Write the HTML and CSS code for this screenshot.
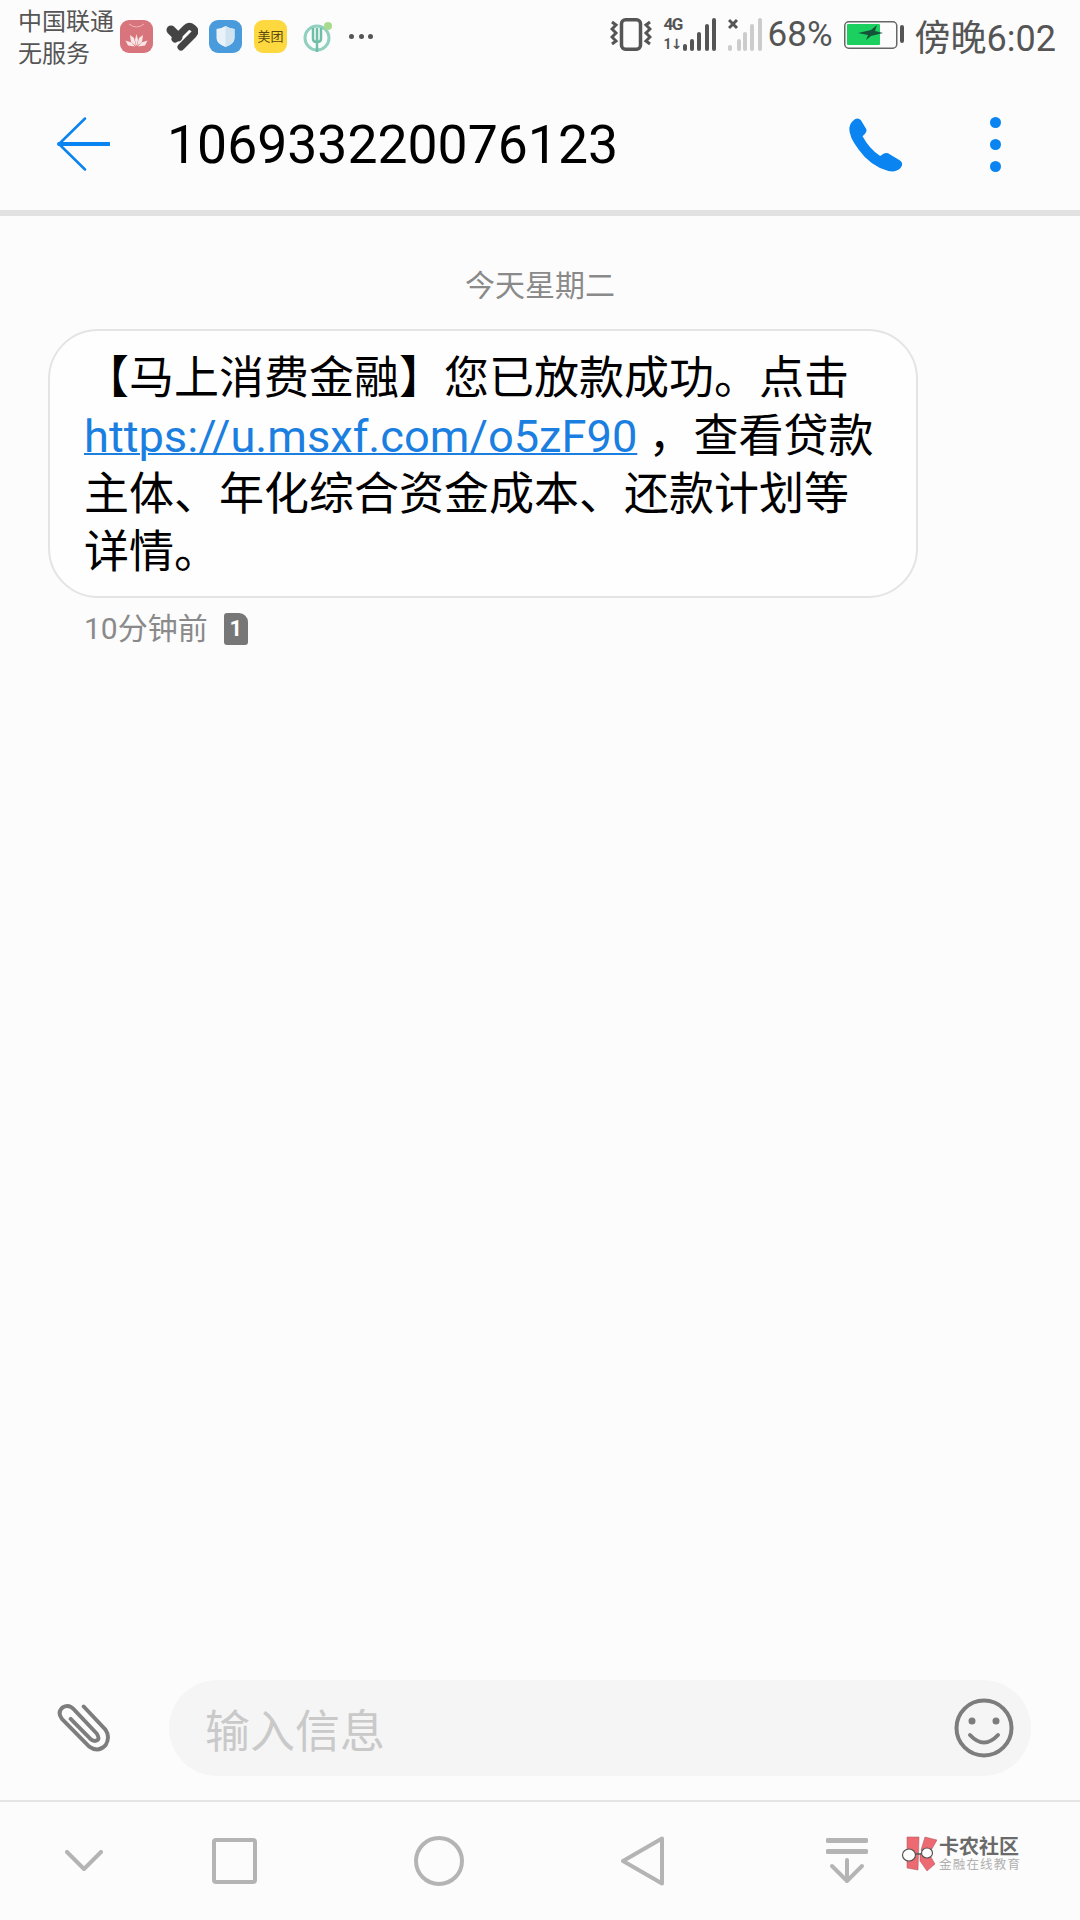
FILE: index.html
```html
<!DOCTYPE html>
<html lang="zh-CN">
<head>
<meta charset="utf-8">
<title>106933220076123</title>
<link rel="stylesheet" href="styles.css">
</head>
<body>
<div class="screen">
  <div class="status">
    <div class="carrier"><span>中国联通</span><span>无服务</span></div>
    <div class="notif">
      <svg class="ni" width="33" height="33" viewBox="0 0 33 33"><rect width="33" height="33" rx="9" fill="#d8747b"/><path d="M9 4q7.500 6 15 0" fill="none" stroke="#eeb5b8" stroke-width="1"/><g fill="#f8e6e6"><path d="M16.500 26l-1.500-6 1.500-6 1.500 6z"/><path d="M16 26l-5-4-1-7 4 3z"/><path d="M17 26l5-4 1-7-4 3z"/><path d="M15 26.500l-7-1-2.500-5 6 2z"/><path d="M18 26.500l7-1 2.500-5-6 2z"/></g></svg>
      <svg class="ni heart" width="33" height="30" viewBox="0 0 33 30"><path d="M6 9l7 7" fill="none" stroke="#444" stroke-width="9" stroke-linecap="round"/><path d="M10 18L21 7q3-3 7 0t0 7L16 26" fill="none" stroke="#444" stroke-width="7" stroke-linecap="round"/></svg>
      <svg class="ni shield" width="33" height="33" viewBox="0 0 33 33"><rect width="33" height="33" rx="9" fill="#4a9bdb"/><path d="M16.500 6q5 3 9 3v9q0 6-9 9-9-3-9-9V9q4 0 9-3z" fill="#e8f2f8"/><path d="M16.500 6q5 3 9 3v9q0 6-9 9z" fill="#cfe3f0"/></svg>
      <div class="ni meituan">美团</div>
      <svg class="ni abc" width="32" height="33" viewBox="0 0 32 33"><circle cx="15" cy="18" r="12" fill="none" stroke="#8fd0bf" stroke-width="3"/><path d="M11 8v11q0 3 4 3t4-3V8M15 8v24" fill="none" stroke="#6fbfa8" stroke-width="2.500"/><circle cx="26" cy="6" r="4" fill="#a8dc8c"/></svg>
      <div class="more"><i></i><i></i><i></i></div>
    </div>
    <div class="sys">
      <svg width="42" height="33" viewBox="0 0 42 33"><rect x="11.500" y="1.750" width="19" height="29.500" rx="4" fill="none" stroke="#555" stroke-width="3.500"/><path d="M2 4l4 3-4 4 4 4-4 4 4 4-4 3M40 4l-4 3 4 4-4 4 4 4-4 4 4 3" fill="none" stroke="#555" stroke-width="3"/></svg>
      <div class="net"><span class="g4">4G</span><span class="arrows">1↓</span></div>
      <svg class="bars" width="34" height="33" viewBox="0 0 34 33"><g fill="#555"><rect x="0" y="26" width="4" height="7" rx="2"/><rect x="7" y="21" width="4" height="12" rx="2"/><rect x="14" y="14" width="4" height="19" rx="2"/><rect x="22" y="6" width="4" height="27" rx="2"/><rect x="29" y="0" width="4" height="33" rx="2"/></g></svg>
      <svg class="sim2" width="34" height="33" viewBox="0 0 34 33"><path d="M1 2l8 8M9 2l-8 8" stroke="#555" stroke-width="3" fill="none"/><g fill="#ccc"><rect x="0" y="27" width="4" height="6" rx="2"/><rect x="9" y="21" width="4" height="12" rx="2"/><rect x="15" y="14" width="4" height="19" rx="2"/><rect x="22" y="6" width="4" height="27" rx="2"/><rect x="30" y="0" width="4" height="33" rx="2"/></g></svg>
      <span class="pct">68%</span>
      <svg class="batt" width="60" height="28" viewBox="0 0 60 28"><rect x=".75" y=".75" width="52" height="26.500" rx="4" fill="none" stroke="#666" stroke-width="1.500"/><rect x="3" y="3" width="33" height="21" rx="1" fill="#1bd05f"/><path d="M14 12l13-3 6-5-2 6 8 2-12 3-5 4 2-5z" fill="#14523a"/><rect x="56" y="4" width="4" height="18" rx="2" fill="#555"/></svg>
      <span class="time">傍晚6:02</span>
    </div>
  </div>

  <div class="header">
    <svg class="back" width="53" height="54" viewBox="0 0 53 54"><path d="M28 1.500L2 27l26 25.500" fill="none" stroke="#0a84f0" stroke-width="2.500" stroke-linecap="round" stroke-linejoin="round"/><path d="M2 27h50" stroke="#0a84f0" stroke-width="4" stroke-linecap="round"/></svg>
    <h1 class="title">106933220076123</h1>
    <svg class="phone" width="58" height="57" viewBox="50 30 175 170"><path d="M75 38Q85 33 92 42L108 68Q112 75 105 82L97 90Q115 125 150 150L160 143Q170 138 180 145L210 163Q222 172 212 185 198 200 175 195 120 180 85 130 55 90 57 65 60 47 75 38z" fill="#0a84f0"/></svg>
    <div class="menu"><i></i><i></i><i></i></div>
  </div>
  <div class="rule"></div>

  <main class="thread">
    <div class="date">今天星期二</div>
    <div class="bubble">【马上消费金融】您已放款成功。点击<br><a class="link">https://u.msxf.com/o5zF90</a> ，查看贷款<br>主体、年化综合资金成本、还款计划等<br>详情。</div>
    <div class="meta"><span>10分钟前</span><div class="sim">1</div></div>
  </main>

  <div class="composer">
    <svg class="clip" width="54" height="50" viewBox="48 38 166 150"><path d="M130 47L197 118Q212 140 198 165 175 190 147 170L63 85Q48 65 65 50 85 38 102 58L170 130Q182 148 168 152 160 155 150 146L90 85" fill="none" stroke="#7d7d7d" stroke-width="12" stroke-linecap="round" stroke-linejoin="round"/></svg>
    <div class="input">
      <span class="ph">输入信息</span>
      <svg width="60" height="60" viewBox="0 0 60 60"><circle cx="30" cy="30" r="27.500" fill="none" stroke="#7d7d7d" stroke-width="4"/><circle cx="18" cy="23" r="3.500" fill="#7d7d7d"/><circle cx="42" cy="23" r="3.500" fill="#7d7d7d"/><path d="M16 37q14 15 28 0" fill="none" stroke="#7d7d7d" stroke-width="4" stroke-linecap="round"/></svg>
    </div>
  </div>

  <nav class="nav">
    <svg class="n-chev" width="38" height="22" viewBox="0 0 38 22"><path d="M2 2l17 17L36 2" fill="none" stroke="#b4b4b4" stroke-width="4" stroke-linecap="round" stroke-linejoin="round"/></svg>
    <svg class="n-sq" width="45" height="46" viewBox="0 0 45 46"><rect x="2" y="2" width="41" height="42" rx="2" fill="none" stroke="#b4b4b4" stroke-width="4"/></svg>
    <svg class="n-ci" width="50" height="50" viewBox="0 0 50 50"><circle cx="25" cy="25" r="23" fill="none" stroke="#b4b4b4" stroke-width="4"/></svg>
    <svg class="n-tr" width="43" height="50" viewBox="0 0 43 50"><path d="M41 2.500v45L2 25z" fill="none" stroke="#b4b4b4" stroke-width="4" stroke-linejoin="round"/></svg>
    <svg class="n-dl" width="42" height="46" viewBox="0 0 42 46"><path d="M2 2.500h38M2 13.500h38" stroke="#b4b4b4" stroke-width="5" stroke-linecap="round"/><path d="M21 22v21M6 28l15 15 15-15" fill="none" stroke="#b4b4b4" stroke-width="4" stroke-linecap="round" stroke-linejoin="round"/></svg>
    <div class="logo">
      <svg width="36" height="36" viewBox="0 0 36 36"><g fill="#ee6a72" stroke="#a0555c" stroke-width=".5"><path d="M6 1h12l-1 33-11-2z"/><path d="M24 1l12 3-8 14-8-4z"/><path d="M19 18l8-2 7 12-8 7-7-10z"/></g><path d="M14 18h6" stroke="#555" stroke-width="1.500"/><ellipse cx="8" cy="19" rx="6.500" ry="6" fill="#fff" stroke="#555" stroke-width="1.200"/><ellipse cx="26" cy="17" rx="5.500" ry="5" fill="#fff" stroke="#555" stroke-width="1.200"/></svg>
      <div class="logo-t"><span class="l1">卡农社区</span><span class="l2">金融在线教育</span></div>
    </div>
  </nav>
</div>
</body>
</html>
```

FILE: styles.css
```css
* { box-sizing: border-box; }
html, body { margin: 0; padding: 0; }
body { background: #fcfcfc; font-family: Roboto, "Noto Sans CJK SC", sans-serif; }
.screen { width: 1080px; height: 1920px; display: flex; flex-direction: column; overflow: hidden; }

.status { height: 70px; display: flex; align-items: center; padding: 2px 24px 0 18px; color: #555; }
.carrier { display: flex; flex-direction: column; width: 102px; padding-top: 3px; font-size: 24px; line-height: 32px; color: #555; }
.notif { display: flex; align-items: center; }
.ni { flex: none; margin-right: 11px; }
.heart { margin-left: 1px; }
.shield { margin-right: 12px; }
.meituan { width: 33px; height: 33px; margin-right: 15px; border-radius: 9px; background: #fdd93f; color: #5a4a10; font-size: 13px; line-height: 33px; text-align: center; }
.abc { margin-right: 15px; }
.more { display: flex; gap: 4.500px; }
.more i { width: 5px; height: 5px; border-radius: 50%; background: #555; }
.sys { margin: -3px 0 0 auto; display: flex; align-items: center; }
.net { display: flex; flex-direction: column; width: 18px; margin-left: 12px; font-family: Roboto, "DejaVu Sans", sans-serif; font-weight: 700; line-height: 13px; white-space: nowrap; }
.g4 { font-size: 17px; letter-spacing: -1.500px; }
.arrows { font-size: 14px; margin-top: 7px; letter-spacing: -1px; }
.bars { margin-left: 1px; }
.sim2 { margin-left: 11px; }
.pct { font-size: 35px; margin-left: 6px; }
.batt { margin-left: 11px; }
.time { font-size: 36px; margin-left: 11px; }

.header { height: 140px; display: flex; align-items: center; padding: 8px 0 0 57px; }
.back { flex: none; }
.title { flex: 1; margin: 0 0 0 57px; font-size: 53.500px; font-weight: 400; color: #000; }
.phone { flex: none; margin-right: 85px; }
.menu { width: 11px; display: flex; flex-direction: column; gap: 11px; margin-right: 79px; }
.menu i { width: 11px; height: 11px; border-radius: 50%; background: #0a84f0; }
.rule { height: 6px; background: #e2e2e2; }

.thread { flex: 1; padding-top: 50px; }
.date { font-size: 30px; line-height: 40px; text-align: center; color: #8a8a8a; }
.bubble { width: 870px; margin: 23px 0 0 48px; padding: 19px 20px 14px 34px; border: 2px solid #e4e4e4; border-radius: 50px; background: #fefefe; font-size: 45px; line-height: 58px; color: #000; white-space: nowrap; }
.link { color: #1a7fe0; font-size: 45.200px; text-decoration: underline; text-decoration-thickness: 2px; }
.meta { display: flex; align-items: center; margin: 14px 0 0 84px; color: #8a8a8a; font-size: 30px; line-height: 34px; }
.sim { width: 24px; height: 32px; margin-left: 16px; background: #777; color: #fff; border-radius: 3px 9px 3px 3px; font-size: 22px; font-weight: 700; line-height: 32px; text-align: center; }

.composer { display: flex; align-items: center; margin-bottom: 24px; padding: 0 49px 0 57px; }
.clip { flex: none; margin-right: 58px; }
.input { flex: 1; height: 96px; border-radius: 48px; background: #f5f5f5; display: flex; align-items: center; justify-content: space-between; padding: 0 17px 0 36px; }
.ph { font-size: 45px; color: #c9c9c9; }

.nav { height: 120px; border-top: 2px solid #e4e4e4; display: flex; align-items: center; padding-left: 65px; }
.nav svg { flex: none; }
.n-sq { margin-left: 109px; }
.n-ci { margin-left: 157px; }
.n-tr { margin-left: 157px; }
.n-dl { margin-left: 162px; }
.logo { display: flex; align-items: center; margin-left: 33px; margin-top: -14px; }
.logo-t { display: flex; flex-direction: column; margin-left: 2px; }
.l1 { font-size: 20px; line-height: 22px; font-weight: 700; color: #6a6a6a; }
.l2 { font-size: 12.500px; line-height: 14px; color: #b0b0b0; white-space: nowrap; letter-spacing: 1.200px; }
```
